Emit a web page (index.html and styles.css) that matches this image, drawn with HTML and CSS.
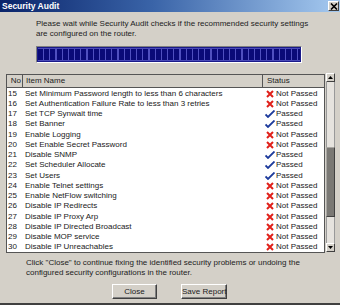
FILE: index.html
```html
<!DOCTYPE html>
<html>
<head>
<meta charset="utf-8">
<link rel="stylesheet" href="styles.css">
</head>
<body>
<div class="window">
  <div class="titlebar">
    <span class="title">Security Audit</span>
    <span class="close-btn"><svg width="8" height="7" viewBox="0 0 8 7"><path d="M1 0.5 L7 6.5 M7 0.5 L1 6.5" stroke="#000" stroke-width="1.6"/></svg></span>
  </div>
  <div class="intro">
    <p>Please wait while Security Audit checks if the recommended security settings<br>are configured on the router.</p>
    <div class="progress"><div class="progress-fill"></div></div>
  </div>
  <div class="table-wrap">
    <div class="table">
      <div class="thead">
        <div class="c-no">No</div>
        <div class="c-name">Item Name</div>
        <div class="c-status">Status</div>
      </div>
      <div class="tbody">
        <div class="row"><span class="c-no">15</span><span class="c-name">Set Minimum Password length to less than 6 characters</span><span class="c-status"><i class="x"></i>Not Passed</span></div>
        <div class="row"><span class="c-no">16</span><span class="c-name">Set Authentication Failure Rate to less than 3 retries</span><span class="c-status"><i class="x"></i>Not Passed</span></div>
        <div class="row"><span class="c-no">17</span><span class="c-name">Set TCP Synwait time</span><span class="c-status"><i class="ok"></i>Passed</span></div>
        <div class="row"><span class="c-no">18</span><span class="c-name">Set Banner</span><span class="c-status"><i class="ok"></i>Passed</span></div>
        <div class="row"><span class="c-no">19</span><span class="c-name">Enable Logging</span><span class="c-status"><i class="x"></i>Not Passed</span></div>
        <div class="row"><span class="c-no">20</span><span class="c-name">Set Enable Secret Password</span><span class="c-status"><i class="x"></i>Not Passed</span></div>
        <div class="row"><span class="c-no">21</span><span class="c-name">Disable SNMP</span><span class="c-status"><i class="ok"></i>Passed</span></div>
        <div class="row"><span class="c-no">22</span><span class="c-name">Set Scheduler Allocate</span><span class="c-status"><i class="ok"></i>Passed</span></div>
        <div class="row"><span class="c-no">23</span><span class="c-name">Set Users</span><span class="c-status"><i class="ok"></i>Passed</span></div>
        <div class="row"><span class="c-no">24</span><span class="c-name">Enable Telnet settings</span><span class="c-status"><i class="x"></i>Not Passed</span></div>
        <div class="row"><span class="c-no">25</span><span class="c-name">Enable NetFlow switching</span><span class="c-status"><i class="x"></i>Not Passed</span></div>
        <div class="row"><span class="c-no">26</span><span class="c-name">Disable IP Redirects</span><span class="c-status"><i class="x"></i>Not Passed</span></div>
        <div class="row"><span class="c-no">27</span><span class="c-name">Disable IP Proxy Arp</span><span class="c-status"><i class="x"></i>Not Passed</span></div>
        <div class="row"><span class="c-no">28</span><span class="c-name">Disable IP Directed Broadcast</span><span class="c-status"><i class="x"></i>Not Passed</span></div>
        <div class="row"><span class="c-no">29</span><span class="c-name">Disable MOP service</span><span class="c-status"><i class="x"></i>Not Passed</span></div>
        <div class="row"><span class="c-no">30</span><span class="c-name">Disable IP Unreachables</span><span class="c-status"><i class="x"></i>Not Passed</span></div>
      </div>
    </div>
    <div class="scrollbar">
      <div class="sb-btn"><svg width="5" height="3" viewBox="0 0 5 3"><path d="M0 3 L2.5 0 L5 3 Z" fill="#000"/></svg></div>
      <div class="sb-track top"></div>
      <div class="sb-thumb"></div>
      <div class="sb-track bottom"></div>
      <div class="sb-btn"><svg width="5" height="3" viewBox="0 0 5 3"><path d="M0 0 L2.5 3 L5 0 Z" fill="#000"/></svg></div>
    </div>
  </div>
  <p class="footer-text">Click "Close" to continue fixing the identified security problems or undoing the<br>configured security configurations in the router.</p>
  <div class="buttons">
    <button class="btn btn-close">Close</button>
    <button class="btn btn-save">Save Report</button>
  </div>
</div>
</body>
</html>
```

FILE: styles.css
```css
* { box-sizing: border-box; }
html, body { margin: 0; padding: 0; }
body {
  width: 340px;
  height: 305px;
  background: #d4d0c8;
  font-family: "Liberation Sans", Arial, sans-serif;
  font-size: 8px;
  color: #000;
  overflow: hidden;
}
.window {
  width: 340px;
  height: 305px;
  display: flex;
  flex-direction: column;
  border-bottom: 2px solid #404040;
}
.titlebar {
  height: 12px;
  flex: none;
  background: linear-gradient(to right, #0a246a 0%, #3a64a8 45%, #a6caf0 100%);
  display: flex;
  align-items: center;
  justify-content: space-between;
  padding: 0 1px 0 2px;
}
.title {
  color: #fff;
  font-weight: bold;
  font-size: 8.5px;
  line-height: 12px;
}
.close-btn {
  width: 11px;
  height: 10px;
  background: #d4d0c8;
  border: 1px solid;
  border-color: #fff #404040 #404040 #fff;
  display: flex;
  align-items: center;
  justify-content: center;
}
.intro {
  padding: 7px 0 0 36px;
  flex: none;
}
.intro p {
  margin: 0;
  line-height: 10px;
  font-size: 8px;
  color: #222;
}
.progress {
  margin-top: 7px;
  width: 266px;
  height: 17px;
  border: 1px solid;
  border-color: #808080 #fff #fff #808080;
  background: #1a1a8a;
  padding: 1px;
}
.progress-fill {
  height: 100%;
  border-top: 1px solid #4a4ab8;
  border-bottom: 1px solid #4a4ab8;
  background: repeating-linear-gradient(to right, #0a0a78 0px, #0a0a78 5px, #5050c0 5px, #5050c0 6.2px);
}
.table-wrap {
  margin: 11px 0 0 6px;
  display: flex;
  align-items: flex-start;
  flex: none;
}
.table {
  width: 319px;
  height: 179px;
  border: 1px solid #555;
  background: #fff;
  overflow: hidden;
}
.thead {
  height: 13px;
  display: grid;
  grid-template-columns: 16px 240px 1fr;
  background: #d4d0c8;
  border-bottom: 1px solid #555;
  line-height: 12px;
  font-size: 8px;
  color: #222;
}
.thead .c-no { text-align: right; padding-right: 1px; border-right: 1px solid #555; }
.thead .c-name { padding-left: 3px; border-right: 1px solid #555; }
.thead .c-status { padding-left: 4px; }
.tbody { padding-top: 0.5px; }
.row {
  height: 10.25px;
  display: grid;
  grid-template-columns: 18px 236px 1fr;
  align-items: center;
  font-size: 8px;
  line-height: 10px;
  color: #1a1a1a;
  white-space: nowrap;
}
.row .c-no { padding-left: 1px; }
.row .c-status {
  display: flex;
  align-items: center;
  padding-left: 4px;
}
.row i {
  display: inline-block;
  width: 10px;
  height: 8px;
  margin-right: 1px;
  background-repeat: no-repeat;
  background-position: center;
}
.row i.x {
  background-image: url("data:image/svg+xml;utf8,<svg xmlns='http://www.w3.org/2000/svg' width='10' height='8' viewBox='0 0 10 8'><path d='M2 1 L8 7 M8 1 L2 7' stroke='%23e0201a' stroke-width='2'/></svg>");
}
.row i.ok {
  background-image: url("data:image/svg+xml;utf8,<svg xmlns='http://www.w3.org/2000/svg' width='10' height='8' viewBox='0 0 10 8'><path d='M0.5 4.5 L3 7 L9.5 0.5' fill='none' stroke='%231c3a9c' stroke-width='1.8'/></svg>");
}
.scrollbar {
  width: 9px;
  height: 179px;
  margin-left: 1px;
  margin-top: -1px;
  display: flex;
  flex-direction: column;
}
.sb-btn {
  height: 9px;
  flex: none;
  background: #d4d0c8;
  border: 1px solid;
  border-color: #fff #404040 #404040 #fff;
  display: flex;
  align-items: center;
  justify-content: center;
}
.sb-track {
  background: #e6e3de;
  border-left: 1px solid #999;
  border-right: 1px solid #999;
}
.sb-track.top { height: 65px; flex: none; }
.sb-track.bottom { flex: 1; }
.sb-thumb {
  height: 70px;
  flex: none;
  background: #7a7874;
  border: 1px solid;
  border-color: #a8a6a2 #404040 #404040 #a8a6a2;
}
.footer-text {
  margin: 5px 0 0 26px;
  line-height: 10px;
  font-size: 8px;
  color: #222;
}
.buttons {
  display: flex;
  gap: 24px;
  margin: 6px 0 0 112px;
}
.btn {
  height: 15px;
  font-family: "Liberation Sans", Arial, sans-serif;
  font-size: 8px;
  white-space: nowrap;
  background: #d4d0c8;
  border: 1px solid;
  border-color: #fff #404040 #404040 #fff;
  box-shadow: inset -1px -1px 0 #808080;
  padding: 0;
  color: #222;
}
.btn-close { width: 45px; }
.btn-save { width: 46px; }
```
